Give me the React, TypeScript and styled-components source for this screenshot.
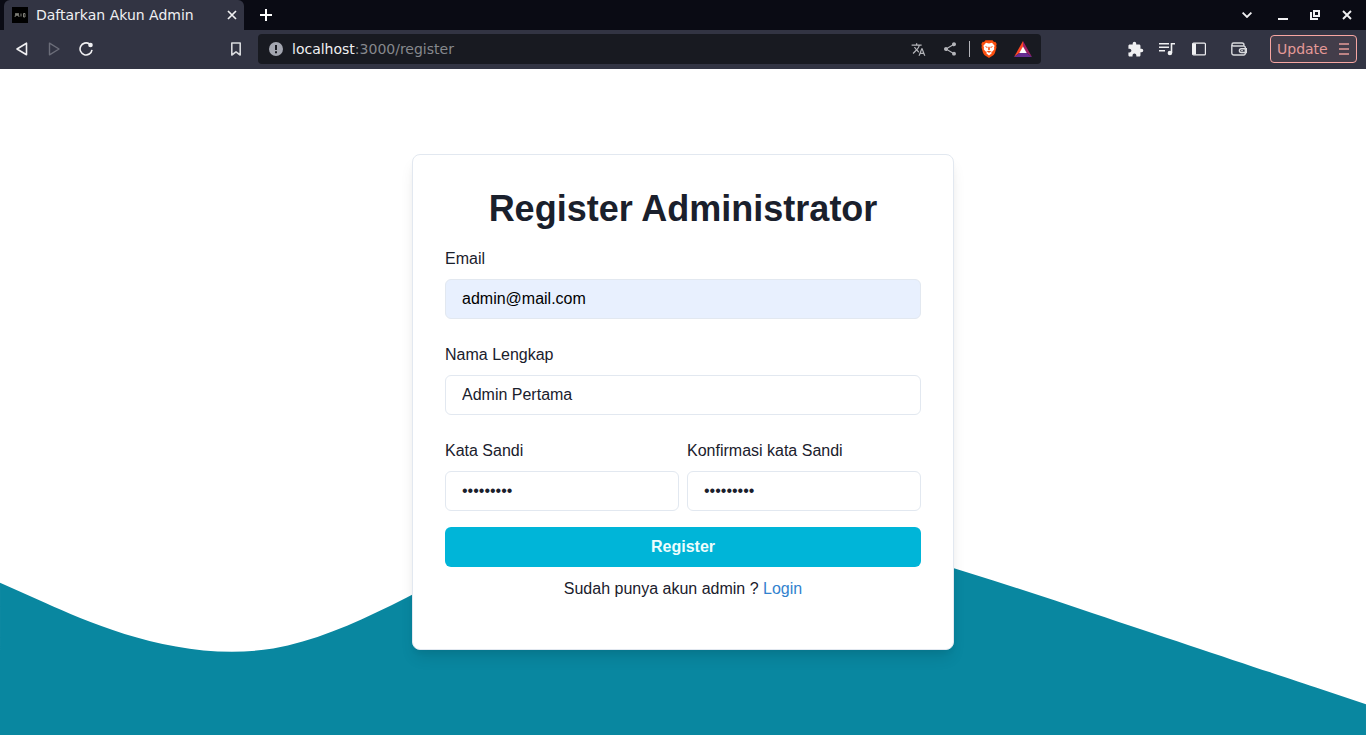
import React from "react";
import styled, { createGlobalStyle } from "styled-components";
import { MdExtension, MdShare, MdTranslate } from "react-icons/md";

const uiFont = `"DejaVu Sans", sans-serif`;
const pageFont = `"Liberation Sans", Arial, sans-serif`;

const GlobalStyle = createGlobalStyle`
  *, *::before, *::after { box-sizing: border-box; }
  body { margin: 0; background: #fff; }
  button, input { font: inherit; color: inherit; margin: 0; }
  button { border: 0; background: none; padding: 0; cursor: pointer; }
`;

const Window = styled.div`
  min-height: 100vh;
  display: flex;
  flex-direction: column;
`;

const Chrome = styled.header`
  font-family: ${uiFont};
  font-size: 14px;
  line-height: 20px;
  color: #f0f0f2;
`;

const TabStrip = styled.div`
  display: flex;
  align-items: stretch;
  height: 30px;
  padding: 0 3px 0 4px;
  background: #0a0b14;
`;

const Tab = styled.div`
  display: flex;
  align-items: center;
  gap: 8px;
  width: 240px;
  padding: 0 4px 0 8px;
  background: #323443;
  border-radius: 6px 6px 0 0;
`;

const TabTitle = styled.span`
  flex: 1;
  white-space: nowrap;
`;

const WindowControls = styled.div`
  display: flex;
  margin-left: auto;
`;

const IconButton = styled.button<{ $width?: number; $color?: string }>`
  display: inline-flex;
  align-items: center;
  justify-content: center;
  flex: none;
  width: ${(p) => p.$width ?? 32}px;
  height: 30px;
  color: ${(p) => p.$color ?? "#f0f0f2"};

  svg { display: block; }
`;

const TabClose = styled(IconButton)`
  width: 16px;
`;

const Toolbar = styled.div`
  display: flex;
  align-items: center;
  height: 39px;
  padding: 0 9px 1px 6px;
  background: #323443;
`;

const NavGroup = styled.div`
  display: flex;
  flex: none;
  width: 252px;
  padding-right: 6px;
`;

const BookmarkSlot = styled.div`
  display: flex;
  margin-left: auto;
`;

const AddressBar = styled.div`
  display: flex;
  align-items: center;
  flex: 1;
  min-width: 0;
  height: 30px;
  padding: 0 2px;
  background: #181a21;
  border-radius: 4px;
`;

const Address = styled.div`
  flex: 1;
  min-width: 0;
  overflow: hidden;
  white-space: nowrap;
  color: #86888d;
  outline: none;
`;

const Host = styled.span`
  color: #f0f0f2;
`;

const Divider = styled.span`
  width: 1px;
  height: 16px;
  margin: 0 3px;
  background: #b4b5ba;
`;

const BraveGroup = styled.div`
  display: flex;
  gap: 2px;
`;

const ActionGroup = styled.div`
  display: flex;
  align-items: center;
  justify-content: flex-end;
  flex: none;
  width: 316px;
`;

const WalletSlot = styled.div`
  display: flex;
  margin: 0 15px 0 8px;
`;

const UpdateButton = styled.button`
  display: flex;
  align-items: center;
  justify-content: space-between;
  width: 87px;
  height: 28px;
  padding: 0 6px;
  border: 1px solid #f7a6a2;
  border-radius: 4px;
  background: #433d4a;
  color: #e59a98;
`;

const Page = styled.main`
  flex: 1;
  display: grid;
  grid-template: minmax(0, 1fr) / minmax(0, 1fr);
  overflow: hidden;
  font-family: ${pageFont};
  font-size: 16px;
  line-height: 24px;
  color: #1a202c;
`;

const Wave = styled.svg`
  grid-area: 1 / 1;
  align-self: end;
  display: block;
  width: 100%;
  height: auto;
  overflow: visible;
`;

const Card = styled.form`
  grid-area: 1 / 1;
  place-self: center;
  display: flex;
  flex-direction: column;
  width: 100%;
  max-width: 542px;
  padding: 32px 32px 48px;
  background: #fff;
  border: 1px solid #e2e8f0;
  border-radius: 8px;
  box-shadow: 0 10px 15px -3px rgba(0, 0, 0, 0.1), 0 4px 6px -2px rgba(0, 0, 0, 0.05);
  z-index: 1;
`;

const Title = styled.h1`
  margin: 0 0 16px;
  font-size: 36px;
  line-height: 44px;
  font-weight: 700;
  text-align: center;
`;

const Fields = styled.div`
  display: flex;
  flex-direction: column;
  gap: 24px;
`;

const FieldRow = styled.div`
  display: flex;
  gap: 8px;
`;

const FieldBox = styled.div`
  display: flex;
  flex-direction: column;
  gap: 8px;
  flex: 1;
  min-width: 0;
`;

const TextInput = styled.input<{ $filled?: boolean }>`
  width: 100%;
  height: 40px;
  padding: 0 16px;
  border: 1px solid #e2e8f0;
  border-radius: 6px;
  outline: none;
  background: ${(p) => (p.$filled ? "#e8f0fe" : "#fff")};
  color: ${(p) => (p.$filled ? "#000" : "#1a202c")};
`;

const SubmitButton = styled.button`
  height: 40px;
  margin: 16px 0 10px;
  border-radius: 6px;
  background: #00b5d8;
  color: #edfdfd;
  font-weight: 700;
`;

const Footnote = styled.p`
  margin: 0;
  text-align: center;
`;

const LoginLink = styled.a`
  color: #3182ce;
  text-decoration: none;
`;

type FieldProps = {
  id: string;
  label: string;
  type: string;
  value: string;
  filled?: boolean;
};

function Field({ id, label, type, value, filled }: FieldProps) {
  return (
    <FieldBox>
      <label htmlFor={id}>{label}</label>
      <TextInput id={id} type={type} defaultValue={value} $filled={filled} />
    </FieldBox>
  );
}

function Cross({ size, weight }: { size: number; weight: number }) {
  return (
    <svg width={size} height={size} viewBox="0 0 10 10" fill="none" stroke="currentColor" strokeWidth={weight}>
      <path d="M1 1l8 8M9 1l-8 8" />
    </svg>
  );
}

function Favicon() {
  return (
    <svg width="16" height="16" viewBox="0 0 16 16" aria-hidden="true">
      <rect width="16" height="16" fill="#000" />
      <path d="M3 10l1-4 1 3 1-3 1 4M9 6.500v3M11.500 6.500h1.500v3.500h-1.500z" fill="none" stroke="#8d8d86" strokeWidth=".9" />
    </svg>
  );
}

function BraveLion() {
  return (
    <svg width="16" height="18" viewBox="0 0 16 18">
      <path d="M4.500.3h7l1.500 1.600 1.300-.2L15.700 4l-.5 1.500.3 1.900-1.600 5.600-1.300 2L8 18l-4.600-3-1.300-2L.5 7.400l.3-1.900L.3 4l1.400-2.300 1.300.2z" fill="#fb4f0f" />
      <path d="M5 2.800l3 .6 3-.6 2.600 3-.6 2 .3 1.400-1.900 2.400-.9.200v1.800L8 15.500l-2.500-1.900v-1.800l-.9-.2-1.900-2.400.3-1.400-.6-2z" fill="#fff" />
      <path d="M3.700 6l3.200.9-.9 1.200zM12.300 6l-3.200.9.900 1.200zM7.400 6.800h1.200l.4 2.600-1 .9-1-.9zM5.500 11.600l2.500-.8 2.500.8L8 12.800z" fill="#fb4f0f" />
    </svg>
  );
}

function RewardsTriangle() {
  return (
    <svg width="18" height="16" viewBox="0 0 18 16">
      <path d="M9 0L0 16l6-4.500L9 6z" fill="#ff4724" />
      <path d="M9 0l9 16-6-4.500L9 6z" fill="#9e1f63" />
      <path d="M0 16h18l-6-4.500H6z" fill="#662d91" />
      <path d="M9 5.500L5.300 12h7.400z" fill="#fff" />
    </svg>
  );
}

export default function App() {
  return (
    <Window>
      <GlobalStyle />
      <Chrome>
        <TabStrip>
          <Tab>
            <Favicon />
            <TabTitle>Daftarkan Akun Admin</TabTitle>
            <TabClose aria-label="Close tab">
              <Cross size={10} weight={1.7} />
            </TabClose>
          </Tab>
          <IconButton aria-label="New tab" $width={44} $color="#fff">
            <svg width="12" height="12" viewBox="0 0 12 12" stroke="currentColor" strokeWidth="2">
              <path d="M6 0v12M0 6h12" />
            </svg>
          </IconButton>
          <WindowControls>
            <IconButton aria-label="Search tabs" $width={40}>
              <svg width="10" height="6" viewBox="0 0 10 6" fill="none" stroke="currentColor" strokeWidth="1.800">
                <path d="M.6.6L5 5 9.400.6" />
              </svg>
            </IconButton>
            <IconButton aria-label="Minimize">
              <svg width="10" height="10" viewBox="0 0 10 10" fill="currentColor">
                <path d="M0 8h10v2H0z" />
              </svg>
            </IconButton>
            <IconButton aria-label="Restore">
              <svg width="10" height="10" viewBox="0 0 10 10" fill="none" stroke="currentColor" strokeWidth="2">
                <path d="M4 1h5v5H4z" />
                <path d="M1 2v7h7" />
              </svg>
            </IconButton>
            <IconButton aria-label="Close window">
              <Cross size={10} weight={1.9} />
            </IconButton>
          </WindowControls>
        </TabStrip>

        <Toolbar>
          <NavGroup>
            <IconButton aria-label="Back">
              <svg width="14" height="14" viewBox="0 0 14 14" fill="none" stroke="currentColor" strokeWidth="1.600" strokeLinejoin="round">
                <path d="M11.500 1.200v11.600L2 7z" />
              </svg>
            </IconButton>
            <IconButton aria-label="Forward" $color="#6b6d79">
              <svg width="14" height="14" viewBox="0 0 14 14" fill="none" stroke="currentColor" strokeWidth="1.400" strokeLinejoin="round">
                <path d="M2.500 1.200v11.600L12 7z" />
              </svg>
            </IconButton>
            <IconButton aria-label="Reload">
              <svg width="14" height="14" viewBox="0 0 14 14" fill="none" stroke="currentColor" strokeWidth="1.600">
                <path d="M10.500 2A6 6 0 1 0 13 7.800" />
                <circle cx="11.500" cy="3" r="2.300" fill="currentColor" stroke="none" />
              </svg>
            </IconButton>
            <BookmarkSlot>
              <IconButton aria-label="Bookmark this page" $color="#d8d9dd">
                <svg width="12" height="14" viewBox="0 0 12 14" fill="none" stroke="currentColor" strokeWidth="1.600" strokeLinejoin="round">
                  <path d="M1.800 1h8.400v12L6 9.800 1.800 13z" />
                </svg>
              </IconButton>
            </BookmarkSlot>
          </NavGroup>

          <AddressBar>
            <IconButton aria-label="Site information" $color="#a3a6b0">
              <svg width="14" height="14" viewBox="0 0 14 14">
                <circle cx="7" cy="7" r="7" fill="currentColor" />
                <path d="M6 3h2v5H6zM6 9.300h2v2H6z" fill="#181a21" />
              </svg>
            </IconButton>
            <Address role="textbox" aria-label="Address" contentEditable suppressContentEditableWarning spellCheck={false}>
              <Host>localhost</Host>:3000/register
            </Address>
            <IconButton aria-label="Translate" $color="#b4b5ba">
              <MdTranslate size={15} />
            </IconButton>
            <IconButton aria-label="Share" $color="#b4b5ba">
              <MdShare size={16} />
            </IconButton>
            <Divider />
            <BraveGroup>
              <IconButton aria-label="Brave Shields">
                <BraveLion />
              </IconButton>
              <IconButton aria-label="Brave Rewards">
                <RewardsTriangle />
              </IconButton>
            </BraveGroup>
          </AddressBar>

          <ActionGroup>
            <IconButton aria-label="Extensions">
              <MdExtension size={17} />
            </IconButton>
            <IconButton aria-label="Media controls">
              <svg width="16" height="14" viewBox="0 0 16 14" fill="none" stroke="currentColor" strokeWidth="1.600">
                <path d="M0 1.800h10M0 5.300h10M0 8.800h6" />
                <path d="M12.500 11V1.800H16" />
                <circle cx="10.900" cy="11" r="2.300" fill="currentColor" stroke="none" />
              </svg>
            </IconButton>
            <IconButton aria-label="Sidebar">
              <svg width="14" height="14" viewBox="0 0 14 14">
                <rect x=".6" y="1.100" width="12.800" height="11.800" rx="1" fill="none" stroke="currentColor" strokeWidth="1.200" />
                <path d="M1 1.500h3V12.500H1z" fill="currentColor" />
              </svg>
            </IconButton>
            <WalletSlot>
              <IconButton aria-label="Wallet" $color="#d8d9dd">
                <svg width="16" height="14" viewBox="0 0 16 14" fill="none" stroke="currentColor" strokeWidth="1.400">
                  <path d="M.8 3v8a2 2 0 0 0 2 2h10a1.500 1.500 0 0 0 1.500-1.500V5.500A1.500 1.500 0 0 0 12.800 4H2.500C.4 4 .5 1 2.500 1H11a2 2 0 0 1 2 2v1" />
                  <path d="M15.300 6.700h-5a1.900 1.900 0 0 0 0 3.800h5z" />
                  <path d="M10.200 8.600h1.600" />
                </svg>
              </IconButton>
            </WalletSlot>
            <UpdateButton>
              Update
              <svg width="12" height="12" viewBox="0 0 12 12" stroke="currentColor" strokeWidth="1.600">
                <path d="M1 1h10M1 6h10M1 11h10" />
              </svg>
            </UpdateButton>
          </ActionGroup>
        </Toolbar>
      </Chrome>

      <Page>
        <Wave viewBox="0 0 1440 320" aria-hidden="true">
          <path
            fill="#0987a0"
            d="M0,160L48,181.3C96,203,192,245,288,229.3C384,213,480,139,576,106.7C672,75,768,85,864,106.7C960,128,1056,160,1152,192C1248,224,1344,256,1392,272L1440,288L1440,324L0,324Z"
          />
        </Wave>
        <Card onSubmit={(event) => event.preventDefault()}>
          <Title>Register Administrator</Title>
          <Fields>
            <Field id="email" label="Email" type="email" value="admin@mail.com" filled />
            <Field id="name" label="Nama Lengkap" type="text" value="Admin Pertama" />
            <FieldRow>
              <Field id="password" label="Kata Sandi" type="password" value="rahasia12" />
              <Field id="confirm" label="Konfirmasi kata Sandi" type="password" value="rahasia12" />
            </FieldRow>
          </Fields>
          <SubmitButton type="submit">Register</SubmitButton>
          <Footnote>
            Sudah punya akun admin ? <LoginLink href="/login">Login</LoginLink>
          </Footnote>
        </Card>
      </Page>
    </Window>
  );
}
